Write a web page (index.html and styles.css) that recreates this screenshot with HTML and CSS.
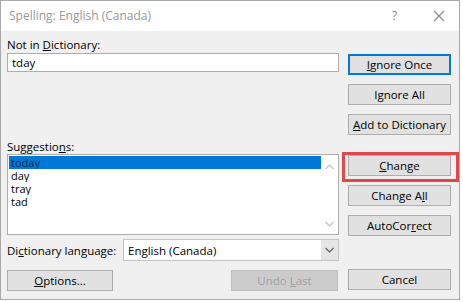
FILE: index.html
```html
<!DOCTYPE html>
<html>
<head>
<meta charset="utf-8">
<link rel="stylesheet" href="styles.css">
</head>
<body>
<div class="window">
  <div class="titlebar">
    <span class="title">Spelling: English (Canada)</span>
    <span class="help">?</span>
    <svg class="close" width="12" height="12" viewBox="0 0 12 12"><path d="M1 1 L11 11 M11 1 L1 11" stroke="#8c8c8c" stroke-width="1.2" fill="none"/></svg>
  </div>
  <div class="content">
    <div class="left">
      <div class="label first">Not in <u>D</u>ictionary:</div>
      <div class="input">tday</div>
      <div class="label sugg">Suggestio<u>n</u>s:</div>
      <div class="listbox">
        <div class="items">
          <div class="item sel"><span class="itxt">today</span></div>
          <div class="item"><span class="itxt">day</span></div>
          <div class="item"><span class="itxt">tray</span></div>
          <div class="item"><span class="itxt">tad</span></div>
        </div>
        <div class="scroll">
          <svg width="9" height="6" viewBox="0 0 9 6"><path d="M0.5 5 L4.5 1 L8.5 5" stroke="#c2c2c2" stroke-width="1.2" fill="none"/></svg>
          <svg width="9" height="6" viewBox="0 0 9 6"><path d="M0.5 1 L4.5 5 L8.5 1" stroke="#c2c2c2" stroke-width="1.2" fill="none"/></svg>
        </div>
      </div>
      <div class="langrow">
        <span class="langlabel">Di<u>c</u>tionary language:</span>
        <div class="select">
          <span class="selval">English (Canada)</span>
          <span class="arrow"><svg width="9" height="6" viewBox="0 0 9 6"><path d="M0.5 1 L4.5 5 L8.5 1" stroke="#606060" stroke-width="1.2" fill="none"/></svg></span>
        </div>
      </div>
      <div class="bottomrow">
        <div class="btn options"><u>O</u>ptions...</div>
        <div class="btn undo disabled">Undo <u>L</u>ast</div>
      </div>
    </div>
    <div class="right">
      <div class="btn default"><u>I</u>gnore Once</div>
      <div class="btn">I<u>g</u>nore All</div>
      <div class="btn"><u>A</u>dd to Dictionary</div>
      <div class="btn change"><u>C</u>hange<span class="highlight"></span></div>
      <div class="btn">Change A<u>l</u>l</div>
      <div class="btn">AutoCor<u>r</u>ect</div>
      <div class="btn cancel">Cancel</div>
    </div>
  </div>
</div>
</body>
</html>
```

FILE: styles.css
```css
html, body {
  margin: 0;
  padding: 0;
  background: #ffffff;
}
body {
  font-family: "Open Sans", "Noto Sans", sans-serif;
  font-size: 11.5px;
  color: #000;
}
u {
  text-decoration: underline;
  text-underline-offset: 1px;
}
.window {
  width: 458px;
  height: 298px;
  border: 1px solid #a9a9a9;
  background: #f0f0f0;
  display: flex;
  flex-direction: column;
}
.titlebar {
  height: 30px;
  background: #ffffff;
  display: flex;
  align-items: center;
  position: relative;
}
.title {
  color: #999999;
  font-size: 12px;
  margin-left: 8px;
  margin-top: -1px;
}
.help {
  position: absolute;
  left: 391px;
  top: 6px;
  color: #8c8c8c;
  font-size: 12px;
}
.close {
  position: absolute;
  left: 432px;
  top: 9px;
}
.content {
  display: flex;
  padding-left: 6px;
  column-gap: 9px;
}
.left {
  width: 332px;
  display: flex;
  flex-direction: column;
}
.right {
  width: 103px;
  display: flex;
  flex-direction: column;
}
.label {
  line-height: 16px;
  height: 16px;
}
.label.first {
  margin-top: 6px;
}
.input {
  height: 17px;
  border: 1px solid #adadad;
  background: #fff;
  line-height: 17px;
  padding-left: 4px;
}
.label.sugg {
  margin-top: 67px;
  height: 15px;
  line-height: 15px;
}
.listbox {
  height: 79px;
  border: 1px solid #adadad;
  background: #fff;
  display: flex;
}
.items {
  flex: 1;
  padding-top: 1px;
}
.item {
  height: 13px;
  padding-left: 3px;
  font-size: 11px;
  overflow: hidden;
}
.itxt {
  display: block;
  height: 13px;
  line-height: 13px;
  overflow: hidden;
}
.item.sel {
  background: #0078d7;
  color: #0a2a55;
  margin-left: 1px;
  padding-left: 2px;
}
.scroll {
  width: 17px;
  background: #fff;
  display: flex;
  flex-direction: column;
  justify-content: space-between;
  align-items: center;
  padding: 9px 0 7px;
}
.langrow {
  margin-top: 4px;
  height: 22px;
  display: flex;
  align-items: center;
}
.langlabel {
  width: 116px;
}
.select {
  width: 214px;
  height: 20px;
  border: 1px solid #c4c4c4;
  background: #fff;
  display: flex;
  align-items: center;
}
.selval {
  flex: 1;
  padding-left: 4px;
}
.arrow {
  width: 17px;
  height: 20px;
  background: #e5e5e5;
  display: flex;
  align-items: center;
  justify-content: center;
}
.bottomrow {
  margin-top: 9px;
  display: flex;
  justify-content: space-between;
  padding-right: 1px;
}
.btn {
  height: 19px;
  line-height: 19px;
  border: 1px solid #adadad;
  background: #e1e1e1;
  text-align: center;
  position: relative;
}
.right .btn {
  margin-top: 9px;
}
.right .btn.default {
  margin-top: 23px;
  border: 2px solid #0078d7;
  height: 17px;
  line-height: 17px;
}
.right .btn.change {
  margin-top: 20px;
}
.right .btn.cancel {
  margin-top: 33px;
}
.options {
  width: 104px;
}
.undo {
  width: 105px;
}
.disabled {
  background: #cccccc;
  border-color: #bfbfbf;
  color: #a0a0a0;
}
.highlight {
  position: absolute;
  left: -7px;
  right: -9px;
  top: -4px;
  bottom: -7px;
  border: 3px solid #e0464a;
  box-sizing: border-box;
}
```
